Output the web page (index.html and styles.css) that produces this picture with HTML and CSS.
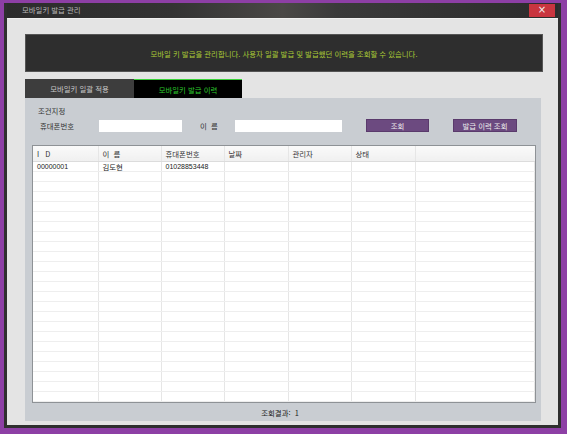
FILE: index.html
```html
<!DOCTYPE html>
<html lang="ko">
<head>
<meta charset="utf-8">
<title>모바일키 발급 관리</title>
<link rel="stylesheet" href="styles.css">
</head>
<body>
<div class="frame">
  <div class="window">
    <div class="titlebar">
      <span class="title">모바일키 발급 관리</span>
      <span class="close">×</span>
    </div>
    <div class="content">
      <div class="banner">모바일 키 발급을 관리합니다. 사용자 일괄 발급 및 발급했던 이력을 조회할 수 있습니다.</div>
      <div class="tabs">
        <div class="tab">모바일키 일괄 적용</div>
        <div class="tab active">모바일키 발급 이력</div>
      </div>
      <div class="panel">
        <div class="cond">조건지정</div>
        <div class="search">
          <span class="lbl lbl-phone">휴대폰번호</span>
          <span class="input input-phone"></span>
          <span class="lbl lbl-name">이&nbsp;&nbsp;름</span>
          <span class="input input-name"></span>
          <span class="btn btn-search">조회</span>
          <span class="btn btn-history">발급 이력 조회</span>
        </div>
        <div class="grid">
          <table>
            <thead>
              <tr><th class="c1">I&nbsp;&nbsp;&nbsp;D</th><th class="c2">이&nbsp;&nbsp;름</th><th class="c3">휴대폰번호</th><th class="c4">날짜</th><th class="c5">관리자</th><th class="c6">상태</th><th class="c7"></th></tr>
            </thead>
            <tbody>
              <tr><td class="num">00000001</td><td>김도현</td><td class="num">01028853448</td><td></td><td></td><td></td><td></td></tr>
              <tr><td></td><td></td><td></td><td></td><td></td><td></td><td></td></tr>
              <tr><td></td><td></td><td></td><td></td><td></td><td></td><td></td></tr>
              <tr><td></td><td></td><td></td><td></td><td></td><td></td><td></td></tr>
              <tr><td></td><td></td><td></td><td></td><td></td><td></td><td></td></tr>
              <tr><td></td><td></td><td></td><td></td><td></td><td></td><td></td></tr>
              <tr><td></td><td></td><td></td><td></td><td></td><td></td><td></td></tr>
              <tr><td></td><td></td><td></td><td></td><td></td><td></td><td></td></tr>
              <tr><td></td><td></td><td></td><td></td><td></td><td></td><td></td></tr>
              <tr><td></td><td></td><td></td><td></td><td></td><td></td><td></td></tr>
              <tr><td></td><td></td><td></td><td></td><td></td><td></td><td></td></tr>
              <tr><td></td><td></td><td></td><td></td><td></td><td></td><td></td></tr>
              <tr><td></td><td></td><td></td><td></td><td></td><td></td><td></td></tr>
              <tr><td></td><td></td><td></td><td></td><td></td><td></td><td></td></tr>
              <tr><td></td><td></td><td></td><td></td><td></td><td></td><td></td></tr>
              <tr><td></td><td></td><td></td><td></td><td></td><td></td><td></td></tr>
              <tr><td></td><td></td><td></td><td></td><td></td><td></td><td></td></tr>
              <tr><td></td><td></td><td></td><td></td><td></td><td></td><td></td></tr>
              <tr><td></td><td></td><td></td><td></td><td></td><td></td><td></td></tr>
              <tr><td></td><td></td><td></td><td></td><td></td><td></td><td></td></tr>
              <tr><td></td><td></td><td></td><td></td><td></td><td></td><td></td></tr>
              <tr><td></td><td></td><td></td><td></td><td></td><td></td><td></td></tr>
              <tr><td></td><td></td><td></td><td></td><td></td><td></td><td></td></tr>
              <tr><td></td><td></td><td></td><td></td><td></td><td></td><td></td></tr>
              <tr><td></td><td></td><td></td><td></td><td></td><td></td><td></td></tr>
            </tbody>
          </table>
        </div>
        <div class="result">조회결과:&nbsp; 1</div>
      </div>
    </div>
  </div>
</div>
</body>
</html>
```
FILE: styles.css
```css
* { box-sizing: border-box; }
html, body { margin: 0; padding: 0; }
body {
  width: 567px;
  height: 434px;
  overflow: hidden;
  font-family: "Noto Sans CJK KR", "Noto Sans", sans-serif;
  font-size: 7.4px;
  color: #333;
}
.frame {
  width: 567px;
  height: 434px;
  background: #8d3fa5;
  padding: 3px 6px 6px 4px;
}
.window {
  height: 100%;
  background: #2f2f2f;
  padding: 0 3px 3px 3px;
  display: flex;
  flex-direction: column;
}
.titlebar {
  height: 15px;
  flex: none;
  display: flex;
  align-items: flex-start;
  justify-content: space-between;
  padding-left: 15px;
  padding-right: 3px;
  background: linear-gradient(90deg, #2c2c2c 0%, #333 30%, #4a4846 50%, #3a3a3a 60%, #2c2c2c 100%);
}
.title {
  color: #b8b8b8;
  line-height: 14px;
}
.close {
  margin-top: 1px;
  width: 26px;
  height: 13px;
  background: #c9353f;
  color: #f2f2f2;
  font-family: "DejaVu Sans", sans-serif;
  font-size: 10px;
  line-height: 12px;
  text-align: center;
}
.content {
  flex: 1;
  background: #e4e4e4;
  border-top: 1px solid #f0f0f0;
  padding: 15px 15px 4px 18px;
  display: flex;
  flex-direction: column;
}
.banner {
  height: 38px;
  flex: none;
  background: #2e2e2e;
  border: 1px solid #555;
  color: #a9c936;
  display: flex;
  align-items: center;
  justify-content: center;
}
.tabs {
  margin-top: 7px;
  height: 19px;
  flex: none;
  display: flex;
}
.tab {
  width: 109px;
  height: 19px;
  background: #3d3d3d;
  color: #c8c8c8;
  display: flex;
  align-items: center;
  justify-content: center;
}
.tab.active {
  width: 108px;
  background: #000;
  color: #2cc82c;
  border-top: 1px solid #3bd23b;
}
.panel {
  flex: 1;
  width: 516px;
  background: #c9cdd2;
  display: flex;
  flex-direction: column;
  padding: 0 5px 0 7px;
}
.cond {
  margin-top: 8px;
  margin-left: 6px;
  line-height: 10px;
  color: #333;
}
.search {
  margin-top: 3px;
  height: 13px;
  display: flex;
  align-items: center;
}
.lbl { color: #333; }
.lbl-phone { width: 67px; padding-left: 8px; }
.lbl-name { width: 53px; padding-left: 18px; }
.input {
  background: #fff;
  height: 12px;
}
.input-phone { width: 83px; }
.input-name { width: 107px; }
.btn {
  height: 13px;
  background: #6c4a80;
  border: 1px solid #5a3a6c;
  color: #ececec;
  display: flex;
  align-items: center;
  justify-content: center;
}
.btn-search { width: 63px; margin-left: 24px; }
.btn-history { width: 64px; margin-left: 24px; }
.grid {
  margin-top: 13px;
  height: 258px;
  background: #fff;
  border: 1px solid #8e9296;
  overflow: hidden;
}
table {
  border-collapse: collapse;
  table-layout: fixed;
  width: 100%;
}
th, td {
  padding: 0 0 0 4px;
  text-align: left;
  font-weight: normal;
  white-space: nowrap;
  overflow: hidden;
  border-right: 1px solid #e6e6e6;
}
th {
  height: 15px;
  color: #333;
  background: linear-gradient(#fafafa, #f0f0f0);
  border-bottom: 1px solid #dcdcdc;
}
td {
  height: 10px;
  line-height: 9px;
  border-bottom: 1px solid #eeeeee;
  color: #222;
}
td.num { font-family: "Liberation Sans", "Noto Sans", sans-serif; font-size: 7px; }
.c1 { width: 65px; }
.c2 { width: 63px; }
.c3 { width: 63px; }
.c4 { width: 64px; }
.c5 { width: 63px; }
.c6 { width: 64px; }
.c7 { border-right: none; }
.result {
  flex: 1;
  display: flex;
  align-items: center;
  justify-content: center;
  color: #222;
  padding-right: 8px;
}
```
